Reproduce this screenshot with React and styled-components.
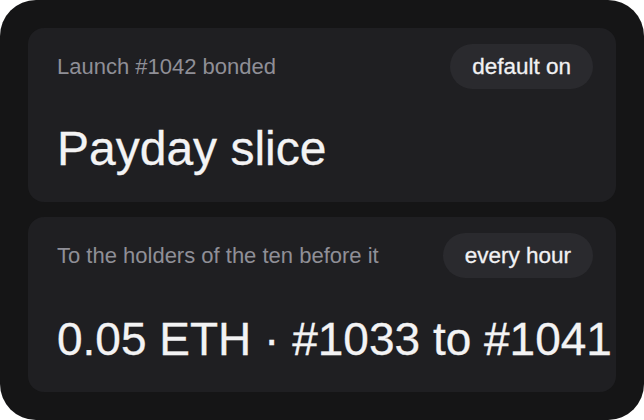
import React from "react";
import styled, { createGlobalStyle } from "styled-components";

const GlobalStyle = createGlobalStyle`
  html, body {
    margin: 0;
    padding: 0;
    background: #ffffff;
  }
  body {
    font-family: "Liberation Sans", Arial, sans-serif;
    -webkit-font-smoothing: antialiased;
  }
`;

const Frame = styled.div`
  width: 644px;
  height: 420px;
  box-sizing: border-box;
  background: #151516;
  border-radius: 36px;
  padding: 28px;
  display: flex;
  flex-direction: column;
  gap: 15px;
`;

const Card = styled.section`
  flex: 1;
  min-height: 0;
  background: #1f1f22;
  border-radius: 16px;
  box-sizing: border-box;
  padding: 16px 23px ${(p) => p.$bottom}px 29px;
  display: flex;
  flex-direction: column;
  justify-content: space-between;
`;

const Header = styled.div`
  display: flex;
  align-items: center;
  justify-content: space-between;
`;

const Label = styled.span`
  font-size: 22px;
  color: #8f8f97;
`;

const Pill = styled.span`
  height: 45px;
  box-sizing: border-box;
  padding: 0 22px;
  border-radius: 999px;
  background: #2a2a2e;
  color: #f1f1f3;
  font-size: 22.5px;
  display: inline-flex;
  align-items: center;
  -webkit-text-stroke: 0.3px #f1f1f3;
`;

const Value = styled.div`
  font-size: ${(p) => p.$size}px;
  line-height: 1;
  color: #f3f3f4;
  white-space: nowrap;
  -webkit-text-stroke: 0.3px #f3f3f4;
`;

const rows = [
  { label: "Launch #1042 bonded", pill: "default on", value: "Payday slice", size: 48, bottom: 29 },
  { label: "To the holders of the ten before it", pill: "every hour", value: "0.05 ETH · #1033 to #1041", size: 46, bottom: 30 },
];

export default function App() {
  return (
    <>
      <GlobalStyle />
      <Frame>
        {rows.map((r) => (
          <Card key={r.label} $bottom={r.bottom}>
            <Header>
              <Label>{r.label}</Label>
              <Pill>{r.pill}</Pill>
            </Header>
            <Value $size={r.size}>{r.value}</Value>
          </Card>
        ))}
      </Frame>
    </>
  );
}
